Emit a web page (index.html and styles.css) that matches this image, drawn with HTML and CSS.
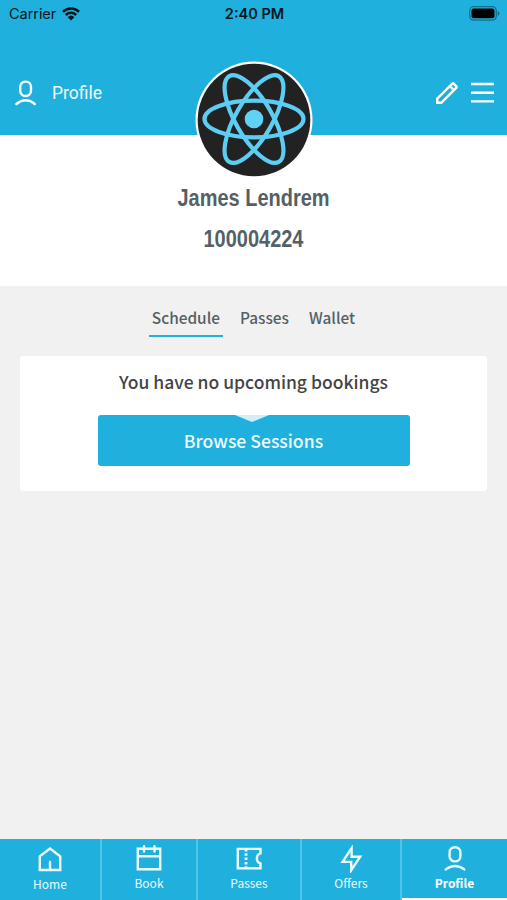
FILE: index.html
```html
<!DOCTYPE html>
<html lang="en">
  <head>
    <meta charset="UTF-8">
    <title>Profile</title>
    <link rel="stylesheet" href="styles.css">
  </head>
  <body>

    <header class="header">
      <div class="status-bar">
        <div class="carrier">
          <span>Carrier</span>
          <svg class="wifi" width="18" height="14" viewBox="0 0 18 14">
            <path d="M1 4.8a11.4 11.4 0 0 1 16 0M3.8 8a7.4 7.4 0 0 1 10.4 0" fill="none" stroke="#03161c" stroke-width="2.5"/>
            <path d="M9 13.5L5.6 10.2a5 5 0 0 1 6.8 0z" fill="#03161c"/>
          </svg>
        </div>
        <span class="time">2:40 PM</span>
        <svg class="battery" width="31" height="15" viewBox="0 0 31 15">
          <rect x=".7" y=".7" width="26.6" height="13.4" rx="4" fill="none" stroke="#146e8a" stroke-width="1.3"/>
          <rect x="2.5" y="2.5" width="23" height="9.8" rx="2" fill="#000"/>
          <path d="M28.7 5v5q1.7-.8 1.7-2.5T28.7 5z" fill="#146e8a"/>
        </svg>
      </div>

      <div class="title-bar">
        <svg class="person" width="22" height="26" viewBox="0 0 22 26">
          <rect x="5.2" y="1.6" width="10.8" height="14.4" rx="5.2"/>
          <path d="M1.4 24Q10.6 16.5 19.8 24"/>
        </svg>
        <span class="title">Profile</span>
        <svg class="pencil" width="24" height="24" viewBox="0 0 24 24">
          <path d="M2.2 21.8v-4.1L17.3 2.6q.7-.6 1.4 0l2.7 2.7q.6.7 0 1.4L6.3 21.8z"/>
          <path d="M14.8 5.1l4.1 4.1"/>
        </svg>
        <svg class="menu" width="23" height="22" viewBox="0 0 23 22">
          <path d="M0 2h23M0 10.8h23M0 19.4h23"/>
        </svg>
      </div>

      <svg class="avatar" width="118" height="118" viewBox="-59 -59 118 118">
        <circle r="58.5" fill="#fff"/>
        <circle r="56.3" fill="#222"/>
        <g transform="translate(0 -1)">
          <g fill="none" stroke="#5ccdf3" stroke-width="4.2">
            <ellipse rx="49.5" ry="18.3"/>
            <ellipse rx="49.5" ry="18.3" transform="rotate(60)"/>
            <ellipse rx="49.5" ry="18.3" transform="rotate(120)"/>
          </g>
          <circle r="9.3" fill="#61d2f7"/>
        </g>
      </svg>
    </header>

    <section class="member">
      <h1 class="name">James Lendrem</h1>
      <div class="number">100004224</div>
    </section>

    <main class="content">
      <div class="tabs">
        <a class="tab active">Schedule</a>
        <a class="tab">Passes</a>
        <a class="tab">Wallet</a>
      </div>

      <div class="card">
        <p class="message">You have no upcoming bookings</p>
        <button class="browse">Browse Sessions</button>
      </div>
    </main>

    <nav class="nav">
      <a class="nav-item home">
        <svg width="24" height="26" viewBox="0 0 24 26">
          <path d="M1.8 10.4L12 2.6l10.2 7.8V24H1.8zM12 24v-8"/>
        </svg>
        <span>Home</span>
      </a>
      <a class="nav-item">
        <svg width="26" height="26" viewBox="0 0 26 26">
          <path d="M1.8 3.8h22.4v20.4H1.8zM1.8 11.2h22.4M8 1.2v5.3M18.5 1.2v5.3"/>
        </svg>
        <span>Book</span>
      </a>
      <a class="nav-item">
        <svg width="26" height="26" viewBox="0 0 26 26">
          <path d="M1.8 3.9h22.7v4.4a5.4 5.4 0 0 0 0 10.2v4.8H1.8z"/>
          <path class="dots" d="M10 5v1.4M10 8.2v2.6M10 12.5v2.6M10 17v2.6M10 21.2v1.4"/>
        </svg>
        <span>Passes</span>
      </a>
      <a class="nav-item">
        <svg width="24" height="28" viewBox="0 0 24 28">
          <path d="M12.6 3.2v8.5h8.6L12.2 25.2v-8.3H3.6z"/>
        </svg>
        <span>Offers</span>
      </a>
      <a class="nav-item active">
        <svg width="22" height="26" viewBox="0 0 22 26">
          <rect x="5.6" y="2.2" width="10.8" height="14.2" rx="5.2"/>
          <path d="M1.8 24.4Q11 17.4 20.2 24.4"/>
        </svg>
        <span>Profile</span>
      </a>
    </nav>

  </body>
</html>
```

FILE: styles.css
```css
* {
  box-sizing: border-box;
}

body {
  margin: 0;
  height: 900px;
  display: flex;
  flex-direction: column;
  overflow: hidden;
  background: #f1f1f1;
  color: #555f66;
  font-family: "Noto Sans CJK SC", "Noto Sans", sans-serif;
}

svg {
  display: block;
  flex: none;
}

.header {
  position: relative;
  height: 135px;
  background: #20b0de;
}

.status-bar {
  display: grid;
  grid-template-columns: 1fr auto 1fr;
  align-items: center;
  height: 27px;
  padding: 0 7px 0 9px;
  color: #03161c;
  font: 14.5px/27px Inter, sans-serif;
}

.carrier {
  display: flex;
  align-items: center;
  gap: 6px;
}

.carrier span {
  letter-spacing: -0.05px;
}

.time {
  font-weight: 600;
}

.battery {
  justify-self: end;
}

.title-bar {
  display: flex;
  align-items: center;
  height: 50px;
  margin-top: 41px;
  padding: 0 13px 0 15px;
}

.title-bar svg {
  fill: none;
  stroke: #fff;
  stroke-width: 2.4;
}

.person,
.nav-item svg {
  stroke-linecap: round;
}

.title {
  flex: 1;
  margin-left: 15px;
  color: #f0fbff;
  font: 17.5px/24px Roboto, sans-serif;
}

.menu {
  margin-left: 12px;
}

.avatar {
  position: absolute;
  top: 61px;
  left: 195px;
}

.member {
  height: 151px;
  padding-top: 42px;
  background: #fff;
  text-align: center;
  font-family: "Liberation Sans Narrow", "Liberation Sans", sans-serif;
}

.name,
.number {
  margin: 0;
  font-size: 24.5px;
  font-weight: bold;
  line-height: 41px;
  transform: scaleX(0.815);
}

.content {
  flex: 1;
  padding: 18px 20px 0;
}

.tabs {
  display: flex;
  justify-content: center;
  gap: 14px;
}

.tab {
  height: 33px;
  padding: 0 3px;
  font-size: 15.4px;
  font-weight: 500;
  line-height: 26px;
}

.tab.active {
  border-bottom: 2.5px solid #20b0de;
}

.card {
  height: 135px;
  margin-top: 19px;
  border-radius: 3px;
  background: #fff;
  text-align: center;
}

.message {
  margin: 0;
  padding-top: 11px;
  color: #444;
  font-size: 17.5px;
  font-weight: 500;
  line-height: 30px;
}

.browse {
  position: relative;
  display: block;
  width: 312px;
  height: 51px;
  margin: 18px auto 0;
  padding: 0;
  border: 0;
  border-radius: 3px;
  background: #20b0de;
  color: #f0fbff;
  font: 500 17.6px/51px "Noto Sans CJK SC", sans-serif;
}

/* notch in the top edge of the button */
.browse::before {
  content: "";
  position: absolute;
  top: 0;
  left: 137px;
  border: solid transparent;
  border-width: 7px 17px 0;
  border-top-color: #d2eff9;
}

.nav {
  display: grid;
  grid-template-columns: 102px 96px 104px 100px 105px;
  height: 61px;
  background: #20b0de;
}

.nav-item {
  display: flex;
  flex-direction: column;
  align-items: center;
  padding-top: 6px;
  border-right: 2px solid #51c4e9;
  color: #e9f9fe;
  font-size: 12px;
  line-height: 18px;
}

.nav-item svg {
  fill: none;
  stroke: #effcff;
  stroke-width: 2.4;
}

.nav-item span {
  margin-top: auto;
  margin-bottom: 8px;
}

.nav-item .dots {
  stroke-width: 2.8;
  stroke-linecap: butt;
}

.nav-item.home {
  padding-top: 7px;
}

.nav-item.home span {
  margin-bottom: 7px;
}

.nav-item.active {
  border-right: 0;
  border-bottom: 2px solid #fff;
  color: #fff;
  font-weight: bold;
}

.nav-item.active span {
  margin-bottom: 6px;
}
```
